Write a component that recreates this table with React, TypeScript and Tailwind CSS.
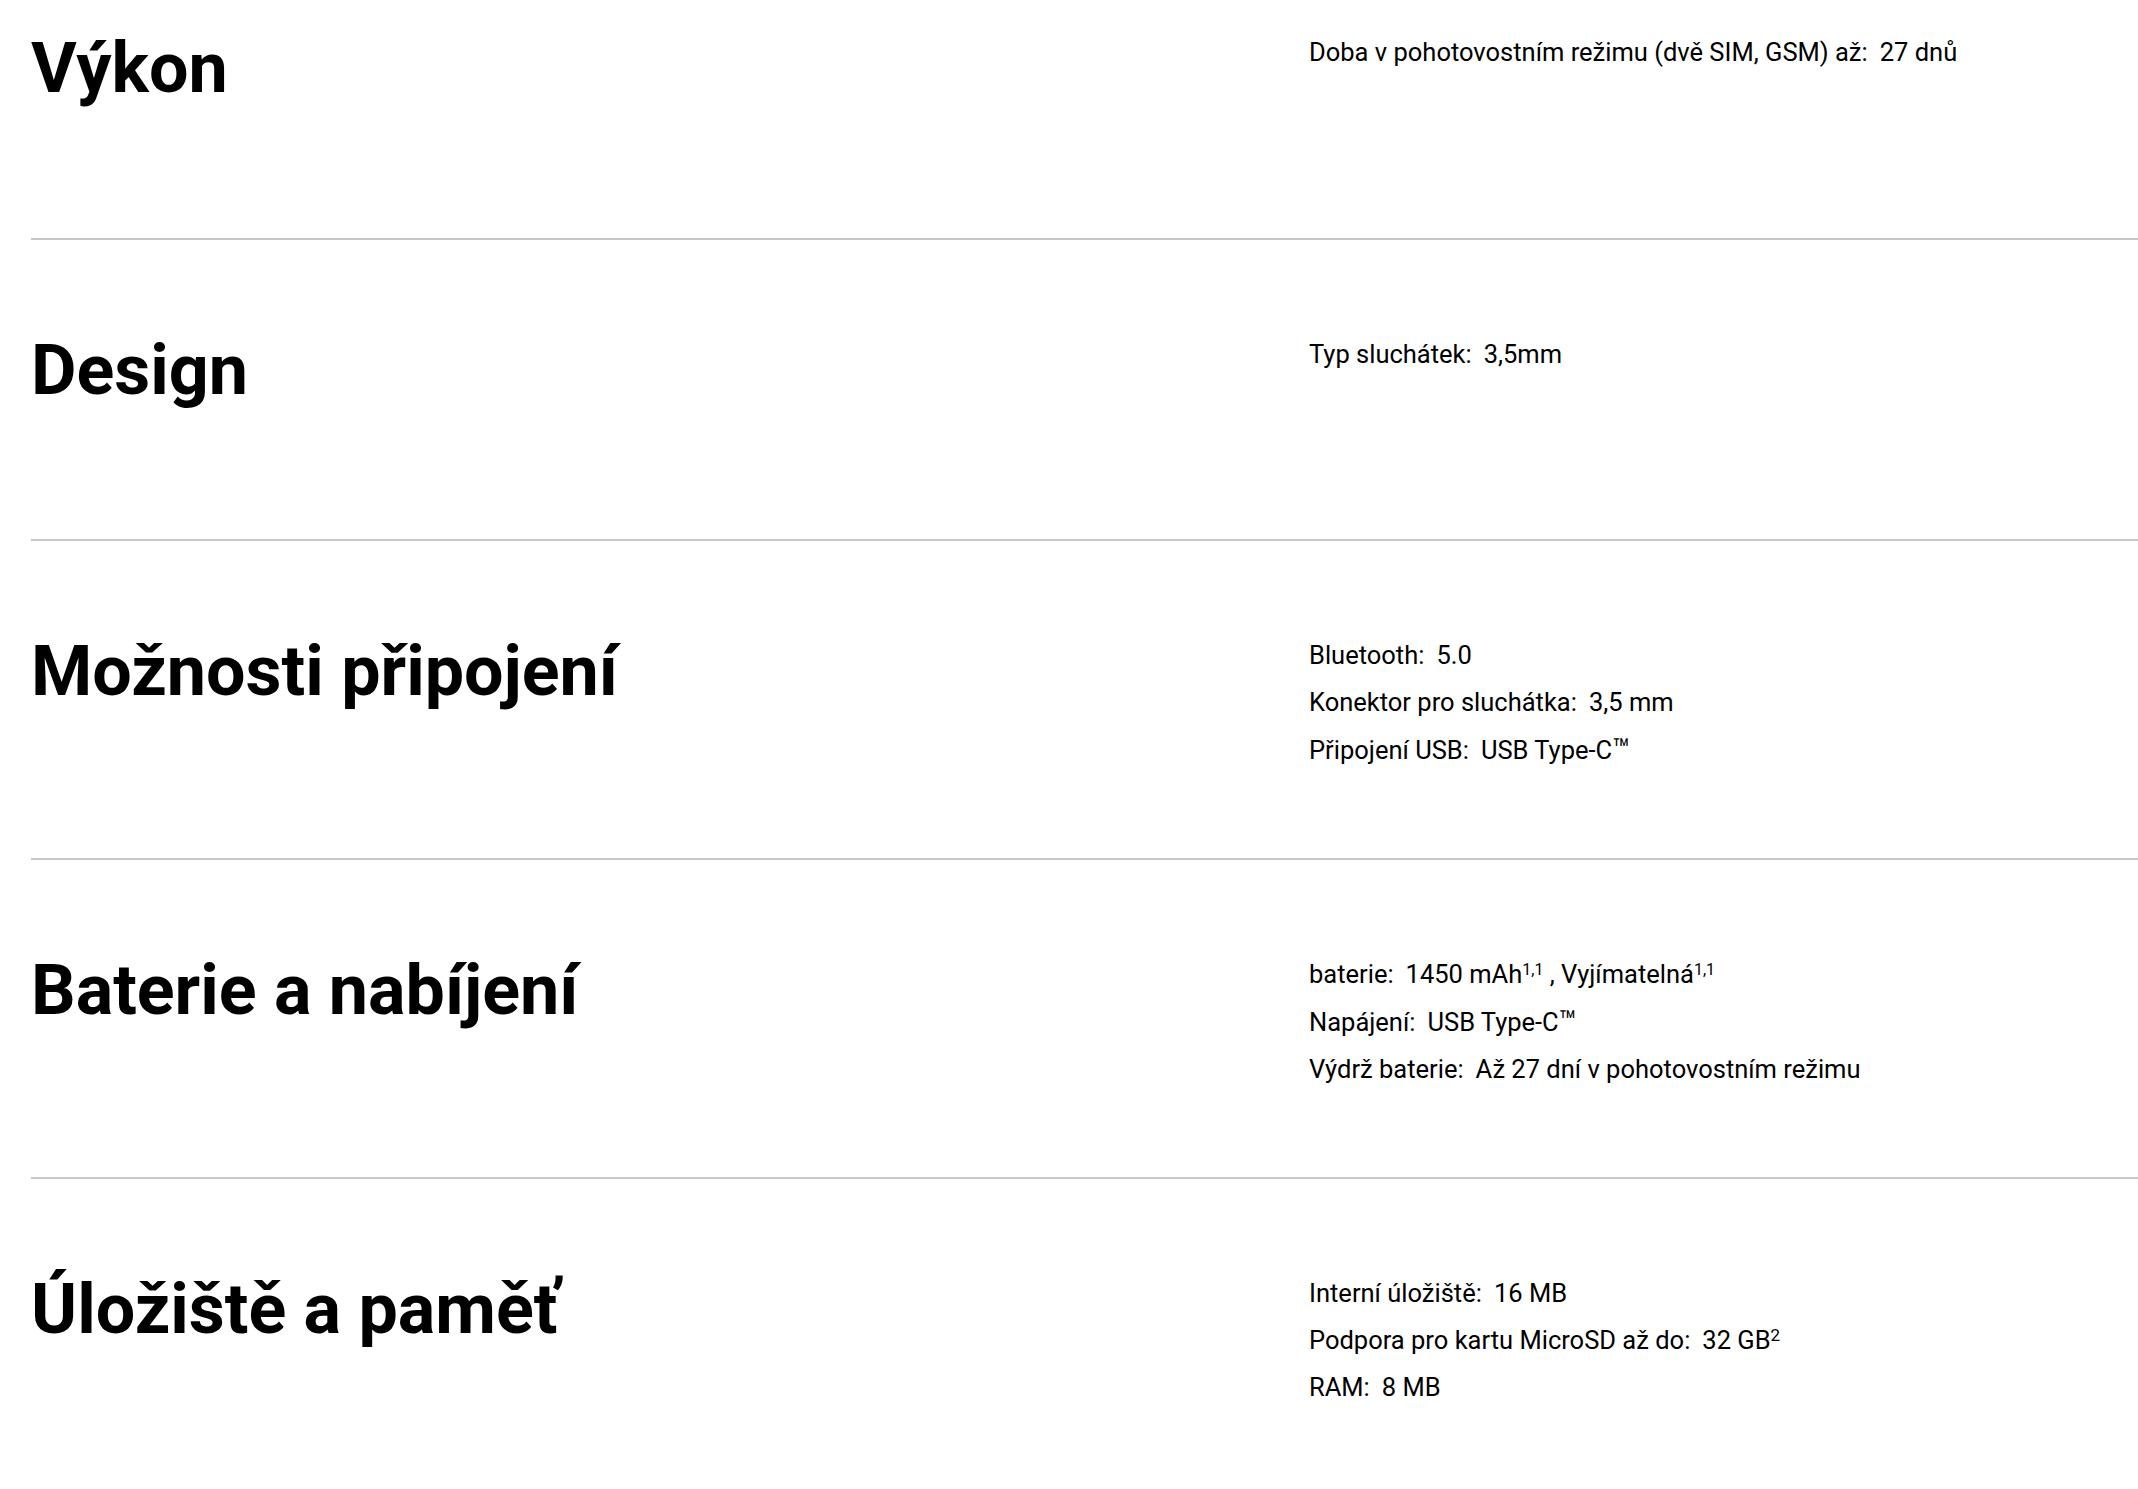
import React from "react";

type Spec = { label: string; value: React.ReactNode };
type Section = { title: string; specs: Spec[] };

const sections: Section[] = [
  {
    title: "Výkon",
    specs: [{ label: "Doba v pohotovostním režimu (dvě SIM, GSM) až:", value: "27 dnů" }],
  },
  {
    title: "Design",
    specs: [{ label: "Typ sluchátek:", value: "3,5mm" }],
  },
  {
    title: "Možnosti připojení",
    specs: [
      { label: "Bluetooth:", value: "5.0" },
      { label: "Konektor pro sluchátka:", value: "3,5 mm" },
      { label: "Připojení USB:", value: <>USB Type-C<span className="text-[1.15em]">™</span></> },
    ],
  },
  {
    title: "Baterie a nabíjení",
    specs: [
      {
        label: "baterie:",
        value: (
          <>
            1450 mAh<sup className="text-[16px]">1,1</sup> , Vyjímatelná
            <sup className="text-[16px]">1,1</sup>
          </>
        ),
      },
      { label: "Napájení:", value: <>USB Type-C<span className="text-[1.15em]">™</span></> },
      { label: "Výdrž baterie:", value: "Až 27 dní v pohotovostním režimu" },
    ],
  },
  {
    title: "Úložiště a paměť",
    specs: [
      { label: "Interní úložiště:", value: "16 MB" },
      {
        label: "Podpora pro kartu MicroSD až do:",
        value: (
          <>
            32 GB<sup className="text-[17px]">2</sup>
          </>
        ),
      },
      { label: "RAM:", value: "8 MB" },
    ],
  },
];

export default function App() {
  return (
    <main className="min-h-screen overflow-hidden bg-white pl-[31px] font-['Roboto',sans-serif] text-black">
      {sections.map((section, i) => (
        <section
          key={section.title}
          className={[
            "flex items-start",
            i === 0 ? "pt-[26px] pb-[85px]" : "pt-[88px] pb-[84px]",
            i < sections.length - 1 ? "border-b-2 border-[#c8c8c8]" : "",
          ].join(" ")}
        >
          <h2 className="mb-[43px] w-[1278px] shrink-0 text-[70px] leading-[84px] font-bold">
            {section.title}
          </h2>
          <ul className="mt-[3px] text-[25.5px] leading-[47px]">
            {section.specs.map((spec) => (
              <li key={spec.label} className="whitespace-nowrap">
                <span>{spec.label}</span>
                <span className="ml-[12px]">{spec.value}</span>
              </li>
            ))}
          </ul>
        </section>
      ))}
    </main>
  );
}
